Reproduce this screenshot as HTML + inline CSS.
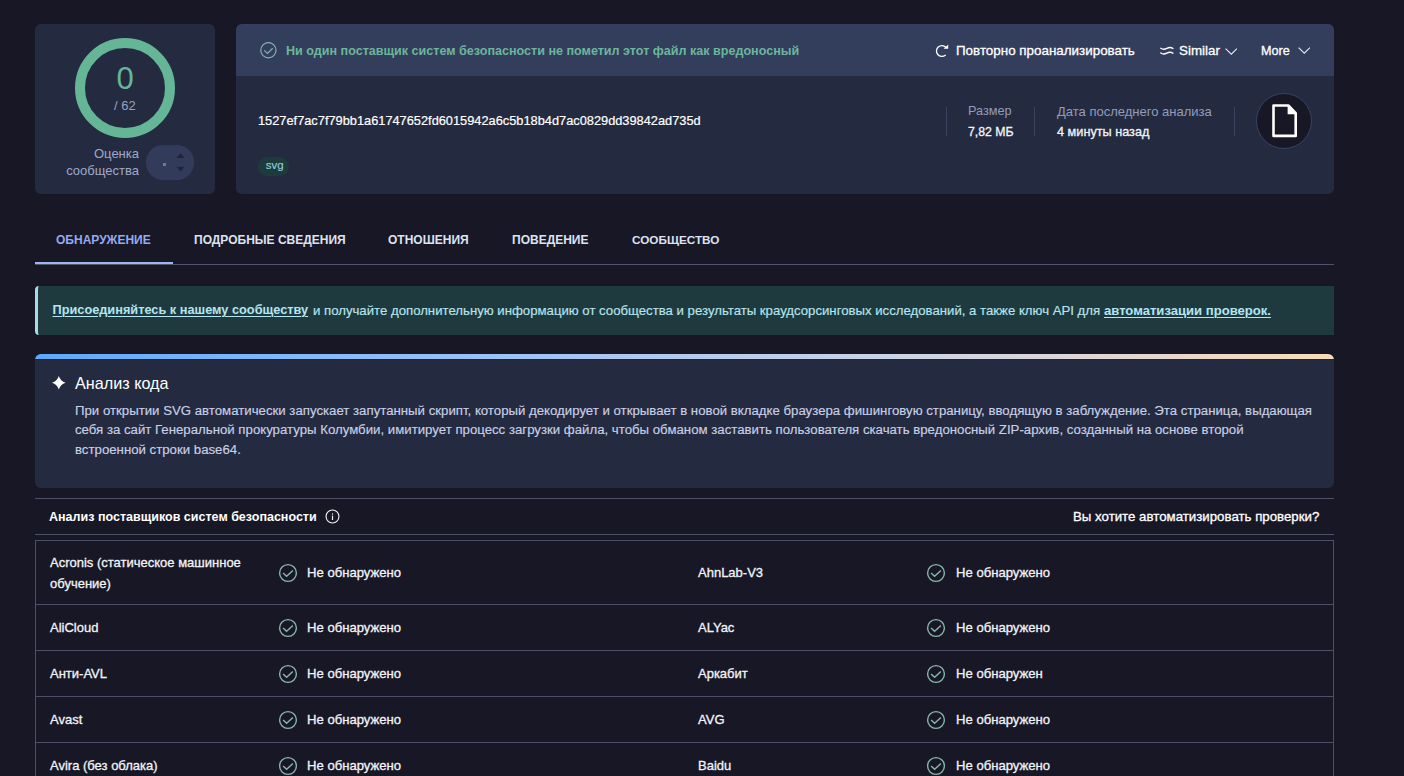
<!DOCTYPE html>
<html><head><meta charset="utf-8">
<style>
*{box-sizing:border-box;margin:0;padding:0}
html,body{width:1404px;height:776px;overflow:hidden;background:#181726;font-family:"Liberation Sans",sans-serif;color:#eef0f6}
.a{position:absolute}
.t{position:absolute;white-space:nowrap;line-height:1}
#lc{left:35px;top:24px;width:180px;height:170px;background:#242b40;border-radius:6px}
#rc{left:236px;top:24px;width:1098px;height:170px;background:#242b40;border-radius:6px;overflow:hidden}
#rch{left:0;top:0;width:1098px;height:52px;background:#323e5c}
.sep{position:absolute;width:1px;background:#3a4260}
.lbl{color:#949bbb;font-size:12.7px}
.val{color:#f2f4f8;font-size:12.7px;-webkit-text-stroke:0.3px #f2f4f8}
.tab{position:absolute;top:234px;font-size:12px;font-weight:bold;color:#dde2f0;line-height:1;white-space:nowrap}
.row{position:absolute;left:35px;width:1299px;border-bottom:1px solid #4c4f66}
.vn{position:absolute;font-size:13px;color:#f2f4f8;line-height:21px;white-space:nowrap;-webkit-text-stroke:0.3px #f2f4f8}
.st{position:absolute;font-size:13.1px;color:#f2f4f8;line-height:1;white-space:nowrap;-webkit-text-stroke:0.3px #f2f4f8}
.ck{position:absolute;width:20px;height:20px}
</style></head><body>

<!-- left card -->
<div id="lc" class="a">
  <svg class="a" style="left:40px;top:14px" width="100" height="100"><circle cx="50" cy="50" r="45" fill="none" stroke="#65b597" stroke-width="10"/></svg>
  <div class="t" style="left:80px;top:38.5px;width:20px;text-align:center;font-size:31px;color:#65b597">0</div>
  <div class="t" style="left:79px;top:75px;font-size:13px;color:#9aa0c0">/ 62</div>
  <div class="t" style="left:10px;top:120.8px;width:94px;text-align:right;font-size:13px;line-height:17.5px;color:#a0a8c8;white-space:normal">Оценка сообщества</div>
  <div class="a" style="left:111px;top:120.5px;width:47.5px;height:35.5px;border-radius:17px/17px;background:#323c5a"></div>
  <div class="a" style="left:127.6px;top:138.9px;width:3.6px;height:3.5px;background:#6f789a"></div>
  <svg class="a" style="left:140.5px;top:128.5px" width="9" height="19"><path d="M0.5 4.9L4.5 0.3 8.5 4.9z" fill="#1f2540"/><path d="M0.5 13.8L4.5 18.5 8.5 13.8z" fill="#1f2540"/></svg>
</div>

<!-- right card -->
<div id="rc" class="a">
  <div id="rch" class="a">
    <svg class="a" style="left:24px;top:18px" width="18" height="18"><circle cx="8.4" cy="8.2" r="7.6" fill="none" stroke="#86aeb4" stroke-width="1.25"/><path d="M4.2 8.4L7.5 11.5 12.7 6.2" fill="none" stroke="#86aeb4" stroke-width="1.25"/></svg>
    <div class="t" style="left:50px;top:20.6px;font-size:12.57px;font-weight:bold;color:#6db59b">Ни один поставщик систем безопасности не пометил этот файл как вредоносный</div>
    <svg class="a" style="left:694px;top:16px" width="24" height="22"><path d="M15.3 15.2A5.4 5.4 0 1 1 15.8 7.3" fill="none" stroke="#fff" stroke-width="1.3" stroke-linecap="round"/><path d="M13.6 8.7H18.2V4.5Z" fill="#fff"/></svg>
    <div class="t" style="left:720px;top:20px;font-size:13.4px;color:#fff;-webkit-text-stroke:0.3px #fff">Повторно проанализировать</div>
    <svg class="a" style="left:924px;top:21px" width="15" height="12"><path d="M0.8 3.3Q3.4 5.2 6.8 3.4T13 3.5M0.8 8Q3.4 9.9 6.8 8.1T13 8.2" fill="none" stroke="#fff" stroke-width="1.3" stroke-linecap="round"/></svg>
    <div class="t" style="left:943px;top:20px;font-size:13.4px;color:#fff;-webkit-text-stroke:0.3px #fff">Similar</div>
    <svg class="a" style="left:989px;top:24.3px" width="13" height="8"><path d="M0.6 0.6L6.3 6.2 11.9 0.6" fill="none" stroke="#e6e9f2" stroke-width="1.1"/></svg>
    <div class="t" style="left:1025px;top:21px;font-size:12.6px;color:#fff;-webkit-text-stroke:0.3px #fff">More</div>
    <svg class="a" style="left:1062px;top:22.5px" width="13" height="8"><path d="M0.6 0.6L6.3 6.2 11.9 0.6" fill="none" stroke="#e6e9f2" stroke-width="1.1"/></svg>
  </div>
  <div class="t" style="left:22px;top:91px;font-size:12.8px;color:#fff;-webkit-text-stroke:0.2px #fff">1527ef7ac7f79bb1a61747652fd6015942a6c5b18b4d7ac0829dd39842ad735d</div>
  <div class="a" style="left:22px;top:132.5px;width:31px;height:19.5px;border-radius:10px;background:#1d3a3c"></div>
  <div class="t" style="left:29.8px;top:135.8px;font-size:11.4px;color:#92d2dc;-webkit-text-stroke:0.15px #92d2dc">svg</div>

  <div class="sep" style="left:710px;top:83px;height:29px"></div>
  <div class="t lbl" style="left:732px;top:81.3px">Размер</div>
  <div class="t val" style="left:732px;top:102px;font-size:12.3px">7,82 МБ</div>
  <div class="sep" style="left:798px;top:83px;height:29px"></div>
  <div class="t lbl" style="left:821px;top:81.3px;font-size:13px">Дата последнего анализа</div>
  <div class="t val" style="left:821px;top:102px">4 минуты назад</div>
  <div class="sep" style="left:998px;top:83px;height:29px"></div>
  <div class="a" style="left:1020px;top:69px;width:56px;height:56px;border-radius:50%;background:#181726;border:1px solid #3b4363"></div>
  <svg class="a" style="left:1036px;top:80px" width="26" height="35"><path d="M1.5 1.5H16.3L23.7 9.2V31.9H1.5Z" fill="none" stroke="#fff" stroke-width="2.6" stroke-linejoin="round"/><path d="M15.6 0.5L24.6 10.2H15.6Z" fill="#fff"/></svg>
</div>

<!-- tabs -->
<div class="a" style="left:35px;top:264px;width:1299px;height:1px;background:#525368"></div>
<div class="a" style="left:35px;top:262px;width:138px;height:2px;background:#9fb6f2"></div>
<div class="tab" style="left:56px;color:#93aaf0">ОБНАРУЖЕНИЕ</div>
<div class="tab" style="left:194px">ПОДРОБНЫЕ СВЕДЕНИЯ</div>
<div class="tab" style="left:388px">ОТНОШЕНИЯ</div>
<div class="tab" style="left:512px">ПОВЕДЕНИЕ</div>
<div class="tab" style="left:632px;font-size:11.76px">СООБЩЕСТВО</div>

<!-- banner -->
<div class="a" style="left:35px;top:286px;width:1299px;height:49px;background:#1f3a3f;border-left:3px solid #a6dce6;border-radius:4px 0 0 4px"></div>
<div class="t" style="left:52.5px;top:304px;font-size:12.76px;font-weight:bold;color:#b2e6f2;text-decoration:underline;text-decoration-thickness:1px;text-underline-offset:2px">Присоединяйтесь к нашему сообществу</div>
<div class="t" id="bn" style="left:313px;top:304px;font-size:13.2px;color:#b8e4ec;-webkit-text-stroke:0.15px #b8e4ec">и получайте дополнительную информацию от сообщества и результаты краудсорсинговых исследований, а также ключ API для</div>
<div class="t" style="left:1104px;top:304px;font-size:13.08px;font-weight:bold;color:#b2e6f2;text-decoration:underline;text-decoration-thickness:1px;text-underline-offset:2px">автоматизации проверок.</div>

<!-- code analysis -->
<div class="a" style="left:35px;top:354px;width:1299px;height:134px;background:#242b40;border-radius:6px;overflow:hidden">
  <div class="a" style="left:0;top:0;width:1299px;height:5px;background:linear-gradient(90deg,#60a8f8 0%,#84b8f8 20%,#a9c6f2 43.5%,#cad3e6 65.8%,#e0d6d4 82%,#f8dcb8 100%)"></div>
  <div class="a" style="left:0;top:5px;width:1299px;height:1px;background:#1c2440"></div>
</div>
<svg class="a" style="left:51.8px;top:375.8px" width="14" height="14"><path d="M6.8 0Q8.4 5.2 13.6 6.8 8.4 8.4 6.8 13.6 5.2 8.4 0 6.8 5.2 5.2 6.8 0Z" fill="#fff"/></svg>
<div class="t" style="left:75px;top:375.2px;font-size:16.2px;color:#fff">Анализ кода</div>
<div class="a" style="left:75px;top:401px;width:1270px;font-size:13.23px;line-height:19.25px;color:#c9d0e6;-webkit-text-stroke:0.15px #c9d0e6">При открытии SVG автоматически запускает запутанный скрипт, который декодирует и открывает в новой вкладке браузера фишинговую страницу, вводящую в заблуждение. Эта страница, выдающая<br>себя за сайт Генеральной прокуратуры Колумбии, имитирует процесс загрузки файла, чтобы обманом заставить пользователя скачать вредоносный ZIP-архив, созданный на основе второй<br>встроенной строки base64.</div>

<!-- vendors header -->
<div class="a" style="left:35px;top:498px;width:1299px;height:1px;background:#4c4f66"></div>
<div class="t" style="left:49px;top:511px;font-size:12.53px;font-weight:bold;color:#fff">Анализ поставщиков систем безопасности</div>
<svg class="a" style="left:325.2px;top:509.3px" width="15" height="15"><circle cx="7.5" cy="7.5" r="6.45" fill="none" stroke="#f4f4f8" stroke-width="1.1"/><path d="M7.5 6.6v4.4" stroke="#f4f4f8" stroke-width="1.2"/><circle cx="7.5" cy="4.95" r="0.7" fill="#f4f4f8"/></svg>
<div class="t" style="left:1073px;top:510px;font-size:13.27px;color:#fff;-webkit-text-stroke:0.3px #fff">Вы хотите автоматизировать проверки?</div>
<div class="a" style="left:35px;top:534px;width:1299px;height:1px;background:#4c4f66"></div>

<!-- table -->
<div class="a" style="left:35px;top:540px;width:1299px;height:250px;border:1px solid #4c4f66;border-bottom:none"></div>
<div class="row" style="top:541px;height:64px"></div>
<div class="row" style="top:605px;height:46px"></div>
<div class="row" style="top:651px;height:46px"></div>
<div class="row" style="top:697px;height:46px"></div>


<div class="vn" style="left:50px;top:552px">Acronis (статическое машинное<br>обучение)</div>
<svg class="ck" style="left:278px;top:563px" viewBox="0 0 20 20"><circle cx="10" cy="10" r="8.4" fill="none" stroke="#88b6ac" stroke-width="1.4"/><path d="M5.1 9.9L8.6 13.2 14.9 7.4" fill="none" stroke="#88b6ac" stroke-width="1.4"/></svg>
<div class="st" style="left:307px;top:566px">Не обнаружено</div>
<div class="vn" style="left:698px;top:562px">AhnLab-V3</div>
<svg class="ck" style="left:926px;top:563px" viewBox="0 0 20 20"><circle cx="10" cy="10" r="8.4" fill="none" stroke="#88b6ac" stroke-width="1.4"/><path d="M5.1 9.9L8.6 13.2 14.9 7.4" fill="none" stroke="#88b6ac" stroke-width="1.4"/></svg>
<div class="st" style="left:956px;top:566px">Не обнаружено</div>
<div class="vn" style="left:50px;top:617px">AliCloud</div>
<svg class="ck" style="left:278px;top:618px" viewBox="0 0 20 20"><circle cx="10" cy="10" r="8.4" fill="none" stroke="#88b6ac" stroke-width="1.4"/><path d="M5.1 9.9L8.6 13.2 14.9 7.4" fill="none" stroke="#88b6ac" stroke-width="1.4"/></svg>
<div class="st" style="left:307px;top:621px">Не обнаружено</div>
<div class="vn" style="left:698px;top:617px">ALYac</div>
<svg class="ck" style="left:926px;top:618px" viewBox="0 0 20 20"><circle cx="10" cy="10" r="8.4" fill="none" stroke="#88b6ac" stroke-width="1.4"/><path d="M5.1 9.9L8.6 13.2 14.9 7.4" fill="none" stroke="#88b6ac" stroke-width="1.4"/></svg>
<div class="st" style="left:956px;top:621px">Не обнаружено</div>
<div class="vn" style="left:50px;top:663px">Анти-AVL</div>
<svg class="ck" style="left:278px;top:664px" viewBox="0 0 20 20"><circle cx="10" cy="10" r="8.4" fill="none" stroke="#88b6ac" stroke-width="1.4"/><path d="M5.1 9.9L8.6 13.2 14.9 7.4" fill="none" stroke="#88b6ac" stroke-width="1.4"/></svg>
<div class="st" style="left:307px;top:667px">Не обнаружено</div>
<div class="vn" style="left:698px;top:663px">Аркабит</div>
<svg class="ck" style="left:926px;top:664px" viewBox="0 0 20 20"><circle cx="10" cy="10" r="8.4" fill="none" stroke="#88b6ac" stroke-width="1.4"/><path d="M5.1 9.9L8.6 13.2 14.9 7.4" fill="none" stroke="#88b6ac" stroke-width="1.4"/></svg>
<div class="st" style="left:956px;top:667px">Не обнаружен</div>
<div class="vn" style="left:50px;top:709px">Avast</div>
<svg class="ck" style="left:278px;top:710px" viewBox="0 0 20 20"><circle cx="10" cy="10" r="8.4" fill="none" stroke="#88b6ac" stroke-width="1.4"/><path d="M5.1 9.9L8.6 13.2 14.9 7.4" fill="none" stroke="#88b6ac" stroke-width="1.4"/></svg>
<div class="st" style="left:307px;top:713px">Не обнаружено</div>
<div class="vn" style="left:698px;top:709px">AVG</div>
<svg class="ck" style="left:926px;top:710px" viewBox="0 0 20 20"><circle cx="10" cy="10" r="8.4" fill="none" stroke="#88b6ac" stroke-width="1.4"/><path d="M5.1 9.9L8.6 13.2 14.9 7.4" fill="none" stroke="#88b6ac" stroke-width="1.4"/></svg>
<div class="st" style="left:956px;top:713px">Не обнаружено</div>
<div class="vn" style="left:50px;top:755px">Avira (без облака)</div>
<svg class="ck" style="left:278px;top:756px" viewBox="0 0 20 20"><circle cx="10" cy="10" r="8.4" fill="none" stroke="#88b6ac" stroke-width="1.4"/><path d="M5.1 9.9L8.6 13.2 14.9 7.4" fill="none" stroke="#88b6ac" stroke-width="1.4"/></svg>
<div class="st" style="left:307px;top:759px">Не обнаружено</div>
<div class="vn" style="left:698px;top:755px">Baidu</div>
<svg class="ck" style="left:926px;top:756px" viewBox="0 0 20 20"><circle cx="10" cy="10" r="8.4" fill="none" stroke="#88b6ac" stroke-width="1.4"/><path d="M5.1 9.9L8.6 13.2 14.9 7.4" fill="none" stroke="#88b6ac" stroke-width="1.4"/></svg>
<div class="st" style="left:956px;top:759px">Не обнаружено</div>
</body></html>
